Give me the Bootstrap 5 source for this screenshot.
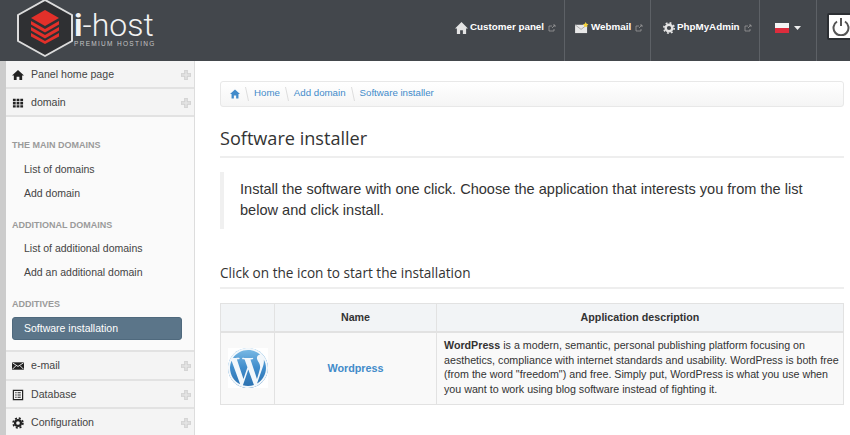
<!DOCTYPE html>
<html lang="en">
<head>
<meta charset="utf-8">
<title>i-host</title>
<link href="https://cdn.jsdelivr.net/npm/bootstrap@5.3.0/dist/css/bootstrap.min.css" rel="stylesheet">
<style>
html,body{height:435px;overflow:hidden}
body{font-family:"Liberation Sans",Arial,sans-serif;font-size:11px;color:#333;background:#fff}
a{text-decoration:none}
.topbar{height:61px;background:#43474c;color:#fff;overflow:hidden}
.logo-box{width:170px;height:61px;padding-left:16px}
.logo-mark{flex:none;margin-right:0}
.logo-name{font-family:Roboto,sans-serif;font-weight:300;font-size:32px;line-height:27px;color:#f2f2f2;margin-top:12px}
.logo-name b{font-weight:700}
.logo-sub{font-size:6.5px;letter-spacing:1.3px;color:#c4c4c4;line-height:7px;margin-top:1px;white-space:nowrap}
.top-item{height:61px;padding-bottom:6px;border-right:1px solid #5d6166;font-weight:700;font-size:9.8px;color:#fff;white-space:nowrap}
.top-item:hover{color:#fff}
.ti-panel{width:115px;padding-left:5px}
.ti-mail{width:86px;padding-left:10px}
.ti-php{width:109px;padding-left:12px}
.ti-lang{width:57px;padding-left:15px}
.ti-icon{margin-right:2px;flex:none}
.ext{margin-left:4px;flex:none}
.caret-mark{margin-left:5px}
.power-wrap{width:33px;height:61px;padding-left:10px;flex:none;padding-bottom:8px}
.power-box{width:30px;height:27px;background:#fff;border:2.5px solid #2c2f33;border-radius:2px;padding-left:3px;flex:none}
.side{width:195px;height:374px;background:#fafafa;border-right:1px solid #ddd;border-left:6px solid #ccc;flex:none;overflow:hidden}
.side-item{height:28px;background:#f4f4f4;border-bottom:2px solid #e2e2e2;padding:2px 3px 0 6px;font-size:10.6px;color:#444}
.side-low{height:28.5px}
.side-icon{width:12px;height:12px;margin-right:7px;flex:none}
.plus{margin-left:auto}
.side-sub{padding:0 12px 10px 6px;background:#fafafa;border-bottom:2px solid #e2e2e2}
.side-head{font-size:9px;font-weight:700;color:#9a9a9a;height:14px;line-height:14px;text-transform:uppercase}
.head-first{margin-top:21px}
.head-next{margin-top:13px}
.side-link{display:block;height:24px;line-height:24px;font-size:10.5px;color:#444;padding-left:12px}
.link-first{margin-top:5px}
.link-second{margin-top:4px}
.side-active{display:block;background:#5b7589;color:#fff;height:23px;line-height:21px;border-radius:3px;border:1px solid #4f697d;padding-left:11px;margin-top:6px;font-size:10.5px}
.side-active:hover{color:#fff}
.main-area{padding:20px 6px 0 25px;min-width:0;flex:1}
.crumbs{height:26px;background:linear-gradient(#fff,#f5f5f5);border:1px solid #e8e8e8;border-radius:3px;padding:0 0 1px 9px;font-size:9.7px;color:#428bca;margin-bottom:19px}
.crumbs a{color:#428bca}
.crumb-sep{width:4px;height:14px;margin:0 5px;flex:none}
.page-title{font-family:"Open Sans",sans-serif;font-size:18.1px;font-weight:400;color:#333;line-height:24px;margin:0;padding-bottom:6px;border-bottom:2px solid #eee}
.intro{border-left:4px solid #f0f0f0;margin:14px 0 0;padding:6.5px 0 6px 16px;font-size:14.57px;line-height:21px;color:#333;height:57px;white-space:nowrap}
.sub-title{font-family:"Open Sans",sans-serif;font-size:13.6px;font-weight:400;color:#333;line-height:20px;margin:34px 0 0;padding-bottom:4px;border-bottom:2px solid #eee}
.app-table{width:624px;margin:14px 0 0;table-layout:fixed;border-collapse:collapse}
.app-table th{background:#f2f4f6;border:1px solid #e2e2e2;border-bottom-width:2px;height:28px;text-align:center;vertical-align:middle;padding:0;font-size:10.7px;color:#333}
.app-table td{background:#f9f9f9;border:1px solid #e2e2e2;height:73px;vertical-align:middle;padding:0;color:#333}
.app-table td.app-desc{padding:5px 7px 7px;line-height:14.6px;font-size:10.7px;white-space:nowrap}
.col-logo{width:54px}
.col-name{width:162px}
.app-link{color:#428bca;font-weight:700;font-size:10.8px}
.wp-tile{display:block;margin:0 auto;background:#fff}
</style>
</head>
<body>
<header class="topbar d-flex align-items-stretch">
  <div class="logo-box d-flex">
    <svg class="logo-mark" width="58" height="58" viewBox="0 0 58 58">
      <path d="M29 0 L56 15 L56 41 L29 56 L2 41 L2 15 Z" fill="#2f3033" stroke="#dcdcdc" stroke-width="2" stroke-linejoin="round"/>
      <g fill="#e3302a">
        <path d="M29 10 L43 18 L29 26 L15 18 Z"/>
        <path d="M15 21 L29 29 L43 21 L43 24.500 L29 32.500 L15 24.500 Z"/>
        <path d="M15 27 L29 35 L43 27 L43 30.500 L29 38.500 L15 30.500 Z"/>
        <path d="M15 33 L29 41 L43 33 L43 36.500 L29 44 L15 36.500 Z"/>
      </g>
    </svg>
    <div>
      <div class="logo-name"><b>i</b>-host</div>
      <div class="logo-sub">PREMIUM HOSTING</div>
    </div>
  </div>
  <nav class="d-flex align-items-stretch ms-auto">
    <a class="top-item ti-panel d-flex align-items-center" href="#">
      <svg class="ti-icon" width="13" height="12" viewBox="0 0 14 13"><path d="M7 0 L14 7 L12 7 L12 13 L8.500 13 L8.500 9 L5.500 9 L5.500 13 L2 13 L2 7 L0 7 Z" fill="#e4e4e4"/></svg>Customer panel<svg class="ext" width="8" height="8" viewBox="0 0 8 8"><path d="M1 2h3M1 2v5h5V5M4 4l3-3M5 1h2v2" fill="none" stroke="#999" stroke-width=".8"/></svg>
    </a>
    <a class="top-item ti-mail d-flex align-items-center" href="#">
      <svg class="ti-icon" width="14" height="12" viewBox="0 0 15 13"><path d="M0 3h13v9H0z" fill="#e8e8e8"/><path d="M0 3l6.500 5L13 3" fill="none" stroke="#999" stroke-width=".8"/><path d="M11.500 0l1 2 2 .5-1.500 1.300.3 2-1.800-1-1.800 1 .3-2L8.500 2.500l2-.5z" fill="#f5d33c"/></svg>Webmail<svg class="ext" width="8" height="8" viewBox="0 0 8 8"><path d="M1 2h3M1 2v5h5V5M4 4l3-3M5 1h2v2" fill="none" stroke="#999" stroke-width=".8"/></svg>
    </a>
    <a class="top-item ti-php d-flex align-items-center" href="#">
      <svg class="ti-icon" width="12" height="12" viewBox="0 0 13 13"><circle cx="6.500" cy="6.500" r="3.600" fill="none" stroke="#e4e4e4" stroke-width="2.600"/><circle cx="6.500" cy="6.500" r="5.600" fill="none" stroke="#e4e4e4" stroke-width="1.800" stroke-dasharray="2 2.400"/></svg>PhpMyAdmin<svg class="ext" width="8" height="8" viewBox="0 0 8 8"><path d="M1 2h3M1 2v5h5V5M4 4l3-3M5 1h2v2" fill="none" stroke="#999" stroke-width=".8"/></svg>
    </a>
    <a class="top-item ti-lang d-flex align-items-center" href="#">
      <svg width="14" height="10" viewBox="0 0 14 10"><rect width="14" height="5" fill="#f4f4f4"/><rect y="5" width="14" height="5" fill="#dc2c3c"/></svg>
      <svg class="caret-mark" width="7" height="4" viewBox="0 0 7 4"><path d="M0 0h7L3.500 4z" fill="#eee"/></svg>
    </a>
    <div class="power-wrap d-flex align-items-center">
      <div class="power-box d-flex align-items-center">
        <svg width="18" height="19" viewBox="0 0 18 19"><path d="M5 4.500a7.500 7.500 0 1 0 8 0" fill="none" stroke="#555" stroke-width="2"/><path d="M9 1v8" stroke="#555" stroke-width="2"/></svg>
      </div>
    </div>
  </nav>
</header>
<div class="d-flex">
  <aside class="side">
    <div class="side-item d-flex align-items-center">
      <svg class="side-icon" viewBox="0 0 13 13"><path d="M6.500 1 L13 7 L11 7 L11 12 L8 12 L8 8.500 L5 8.500 L5 12 L2 12 L2 7 L0 7 Z" fill="#222"/></svg>Panel home page
      <svg class="plus" width="10" height="10" viewBox="0 0 12 12"><path d="M4.500 0h3v4.500H12v3H7.500V12h-3V7.500H0v-3h4.500z" fill="#e4e4e4" stroke="#c8c8c8"/></svg>
    </div>
    <div class="side-item d-flex align-items-center">
      <svg class="side-icon" viewBox="0 0 13 13"><path d="M1 2h3v2.500H1zM5 2h3v2.500H5zM9 2h3v2.500H9zM1 5.500h3V8H1zM5 5.500h3V8H5zM9 5.500h3V8H9zM1 9h3v2.500H1zM5 9h3v2.500H5zM9 9h3v2.500H9z" fill="#222"/></svg>domain
      <svg class="plus" width="10" height="10" viewBox="0 0 12 12"><path d="M4.500 0h3v4.500H12v3H7.500V12h-3V7.500H0v-3h4.500z" fill="#e4e4e4" stroke="#c8c8c8"/></svg>
    </div>
    <div class="side-sub">
      <div class="side-head head-first">The main domains</div>
      <a class="side-link link-first" href="#">List of domains</a>
      <a class="side-link" href="#">Add domain</a>
      <div class="side-head head-next">Additional domains</div>
      <a class="side-link link-second" href="#">List of additional domains</a>
      <a class="side-link" href="#">Add an additional domain</a>
      <div class="side-head head-next">Additives</div>
      <a class="side-active" href="#">Software installation</a>
    </div>
    <div class="side-item side-low d-flex align-items-center">
      <svg class="side-icon" viewBox="0 0 13 13"><path d="M0 2.500h13v8H0z" fill="#222"/><path d="M.5 3l6 4 6-4M.5 10l4-4M12.500 10l-4-4" fill="none" stroke="#f4f4f4" stroke-width="1"/></svg>e-mail
      <svg class="plus" width="10" height="10" viewBox="0 0 12 12"><path d="M4.500 0h3v4.500H12v3H7.500V12h-3V7.500H0v-3h4.500z" fill="#e4e4e4" stroke="#c8c8c8"/></svg>
    </div>
    <div class="side-item side-low d-flex align-items-center">
      <svg class="side-icon" viewBox="0 0 13 13"><path d="M1.500 1.500h10v10h-10z" fill="none" stroke="#222" stroke-width="1.300"/><path d="M3.500 4h1.500M6 4h3.500M3.500 6.500h1.500M6 6.500h3.500M3.500 9h1.500M6 9h3.500" stroke="#222" stroke-width="1.100"/></svg>Database
      <svg class="plus" width="10" height="10" viewBox="0 0 12 12"><path d="M4.500 0h3v4.500H12v3H7.500V12h-3V7.500H0v-3h4.500z" fill="#e4e4e4" stroke="#c8c8c8"/></svg>
    </div>
    <div class="side-item side-low d-flex align-items-center">
      <svg class="side-icon" viewBox="0 0 13 13"><circle cx="6.500" cy="6.500" r="3.200" fill="none" stroke="#222" stroke-width="2.400"/><circle cx="6.500" cy="6.500" r="5.300" fill="none" stroke="#222" stroke-width="1.800" stroke-dasharray="2.200 2"/></svg>Configuration
      <svg class="plus" width="10" height="10" viewBox="0 0 12 12"><path d="M4.500 0h3v4.500H12v3H7.500V12h-3V7.500H0v-3h4.500z" fill="#e4e4e4" stroke="#c8c8c8"/></svg>
    </div>
  </aside>
  <main class="main-area">
    <div class="crumbs d-flex align-items-center">
      <svg width="10" height="10" viewBox="0 0 13 12"><path d="M6.500 0 L13 6 L11 6 L11 12 L8 12 L8 8 L5 8 L5 12 L2 12 L2 6 L0 6 Z" fill="#428bca"/></svg>
      <svg class="crumb-sep" viewBox="0 0 4 14"><path d="M.5 0l3 14" stroke="#ddd" fill="none"/></svg><a href="#">Home</a>
      <svg class="crumb-sep" viewBox="0 0 4 14"><path d="M.5 0l3 14" stroke="#ddd" fill="none"/></svg><a href="#">Add domain</a>
      <svg class="crumb-sep" viewBox="0 0 4 14"><path d="M.5 0l3 14" stroke="#ddd" fill="none"/></svg><a href="#">Software installer</a>
    </div>
    <h1 class="page-title">Software installer</h1>
    <blockquote class="intro">Install the software with one click. Choose the application that interests you from the list<br>below and click install.</blockquote>
    <h2 class="sub-title">Click on the icon to start the installation</h2>
    <table class="app-table">
      <colgroup><col class="col-logo"><col class="col-name"><col></colgroup>
      <thead><tr><th></th><th>Name</th><th>Application description</th></tr></thead>
      <tbody><tr>
        <td>
          <svg class="wp-tile" width="40" height="40" viewBox="0 0 24 24">
            <defs><linearGradient id="wg" x1="0" y1="0" x2="0" y2="1"><stop offset="0" stop-color="#7dbce6"/><stop offset=".5" stop-color="#3f8ccb"/><stop offset="1" stop-color="#2a6fae"/></linearGradient></defs>
            <circle cx="12" cy="12" r="12" fill="url(#wg)"/>
            <path fill="#f2f7fb" d="M21.469 6.825c.84 1.537 1.318 3.3 1.318 5.175 0 3.979-2.156 7.456-5.363 9.325l3.295-9.527c.615-1.54.82-2.771.82-3.864 0-.405-.026-.78-.07-1.11m-7.981.105c.647-.03 1.232-.105 1.232-.105.582-.075.514-.93-.067-.899 0 0-1.755.135-2.88.135-1.064 0-2.85-.15-2.85-.15-.585-.03-.661.855-.075.885 0 0 .54.061 1.125.09l1.68 4.605-2.37 7.08L5.354 6.9c.649-.03 1.234-.1 1.234-.1.585-.075.516-.93-.065-.896 0 0-1.746.138-2.874.138-.2 0-.438-.008-.69-.015C4.911 3.15 8.235 1.215 12 1.215c2.809 0 5.365 1.072 7.286 2.833-.046-.003-.091-.009-.141-.009-1.06 0-1.812.923-1.812 1.914 0 .89.513 1.643 1.06 2.531.411.72.89 1.643.89 2.977 0 .915-.354 1.994-.821 3.479l-1.075 3.585-3.9-11.61.001.014zM12 22.784c-1.059 0-2.081-.153-3.048-.437l3.237-9.406 3.315 9.087c.024.053.05.101.078.149-1.12.393-2.325.609-3.582.609M1.211 12c0-1.564.336-3.05.935-4.39L7.290 21.709C3.694 19.960 1.212 16.271 1.211 12M12 0C5.385 0 0 5.385 0 12s5.385 12 12 12 12-5.385 12-12S18.615 0 12 0"/>
          </svg>
        </td>
        <td class="text-center"><a class="app-link" href="#">Wordpress</a></td>
        <td class="app-desc"><b>WordPress</b> is a modern, semantic, personal publishing platform focusing on<br>aesthetics, compliance with internet standards and usability. WordPress is both free<br>(from the word "freedom") and free. Simply put, WordPress is what you use when<br>you want to work using blog software instead of fighting it.</td>
      </tr></tbody>
    </table>
  </main>
</div>
<script src="https://cdn.jsdelivr.net/npm/bootstrap@5.3.0/dist/js/bootstrap.bundle.min.js"></script>
</body>
</html>
